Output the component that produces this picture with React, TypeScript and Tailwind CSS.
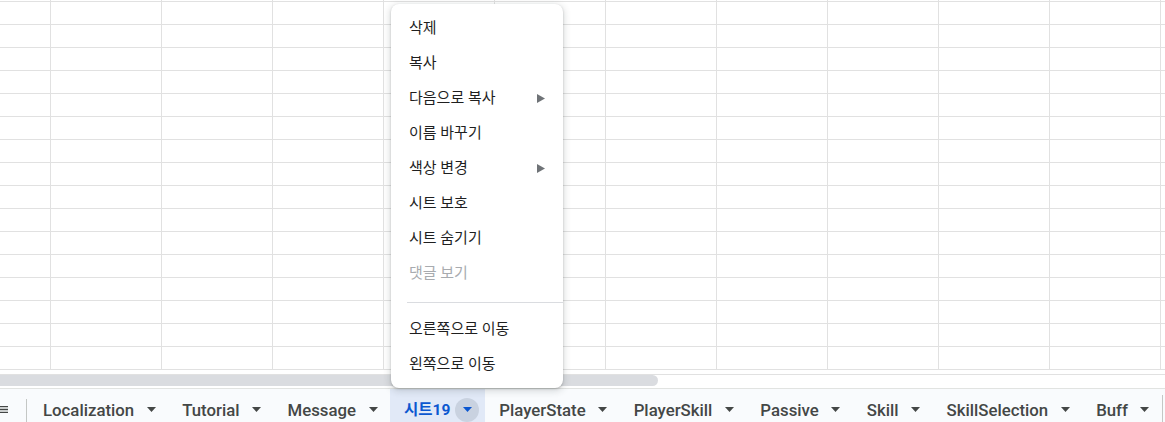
import React from 'react';

const COLS = 10;
const ROWS = 17;

const tabs = [
  { name: 'Localization' },
  { name: 'Tutorial' },
  { name: 'Message' },
  { name: '시트19', active: true },
  { name: 'PlayerState' },
  { name: 'PlayerSkill' },
  { name: 'Passive' },
  { name: 'Skill' },
  { name: 'SkillSelection' },
  { name: 'Buff' },
];

const menuItems: { label: string; sub?: boolean; disabled?: boolean; sep?: boolean }[] = [
  { label: '삭제' },
  { label: '복사' },
  { label: '다음으로 복사', sub: true },
  { label: '이름 바꾸기' },
  { label: '색상 변경', sub: true },
  { label: '시트 보호' },
  { label: '시트 숨기기' },
  { label: '댓글 보기', disabled: true },
  { label: '', sep: true },
  { label: '오른쪽으로 이동' },
  { label: '왼쪽으로 이동' },
];

const Caret = ({ active }: { active?: boolean }) => (
  <svg width="9" height="5" viewBox="0 0 9 5" className="block">
    <path d="M0 0h9L4.5 5z" fill={active ? '#0b57d0' : '#444746'} />
  </svg>
);

const App = () => {
  return (
    <div
      className="relative w-[1165px] h-[422px] overflow-hidden bg-white flex flex-col"
      style={{ fontFamily: 'Roboto, "Noto Sans CJK KR", sans-serif' }}
    >
      {/* grid */}
      <div className="h-[375px] shrink-0 border-b border-[#e1e1e1] overflow-hidden">
        <div className="-mt-[21px]">
          {Array.from({ length: ROWS }).map((_, r) => (
            <div key={r} className="flex h-[23px] border-b border-[#e1e1e1]">
              <div className="w-[51px] shrink-0 border-r border-[#e1e1e1]" />
              {Array.from({ length: COLS }).map((_, c) => (
                <div key={c} className="w-[111px] shrink-0 border-r border-[#e1e1e1]" />
              ))}
            </div>
          ))}
        </div>
      </div>

      {/* horizontal scrollbar */}
      <div className="h-[13px] shrink-0 flex items-start">
        <div className="w-[658px] h-[11px] bg-[#dadce0] rounded-r-full" />
      </div>

      {/* sheet tabs */}
      <div className="h-[42px] shrink-0 flex items-stretch bg-[#f9fbfd] border-t border-[#e1e3e1] text-[#444746] text-[16.8px] font-medium">
        <div className="w-[26px] flex items-center justify-end pr-[18px] shrink-0">
          <svg width="10" height="9" viewBox="0 0 10 9" className="block">
            <path d="M0 0h10v1.6H0zM0 3.7h10v1.6H0zM0 7.4h10V9H0z" fill="#444746" />
          </svg>
        </div>
        <div className="w-px bg-[#c4c7c5] mt-[10px] mb-[8px] shrink-0" />
        {tabs.map((t, i) => (
          <div
            key={t.name}
            className={`flex items-center shrink-0 ${t.active ? 'pl-[14px] pr-[6px] bg-[#e1e9f7] text-[#0b57d0] font-bold text-[15.5px]' : 'pr-[5px]'} ${i === 0 ? 'pl-[16px]' : t.active ? '' : 'pl-[14px]'}`}
          >
            <span className="leading-none pt-[2px]">{t.name}</span>
            <span
              className={`ml-[5px] w-[24px] h-[24px] rounded-full flex items-center justify-center ${t.active ? 'bg-[#c9d2e0]' : ''}`}
            >
              <Caret active={t.active} />
            </span>
          </div>
        ))}
        <div className="w-px bg-[#c4c7c5] my-[6px] shrink-0" />
      </div>

      {/* context menu */}
      <div className="absolute left-[391px] top-[4px] w-[172px] bg-white rounded-lg pt-[7px] pb-[6px] shadow-[0_2px_6px_2px_rgba(60,64,67,0.15),0_1px_2px_rgba(60,64,67,0.3)] text-[15px] text-[#1f1f1f]">
        {menuItems.map((m, i) =>
          m.sep ? (
            <div key={i} className="ml-[16px] mt-[11px] mb-[9px] h-px bg-[#dadce0]" />
          ) : (
            <div
              key={i}
              className={`h-[35px] flex items-center justify-between pl-[18px] pr-[18px] ${m.disabled ? 'text-[#a8abaf]' : ''}`}
            >
              <span>{m.label}</span>
              {m.sub && (
                <svg width="8" height="9" viewBox="0 0 8 9" className="block">
                  <path d="M0 0l8 4.5L0 9z" fill="#6f7377" />
                </svg>
              )}
            </div>
          )
        )}
      </div>
    </div>
  );
};

export default App;
